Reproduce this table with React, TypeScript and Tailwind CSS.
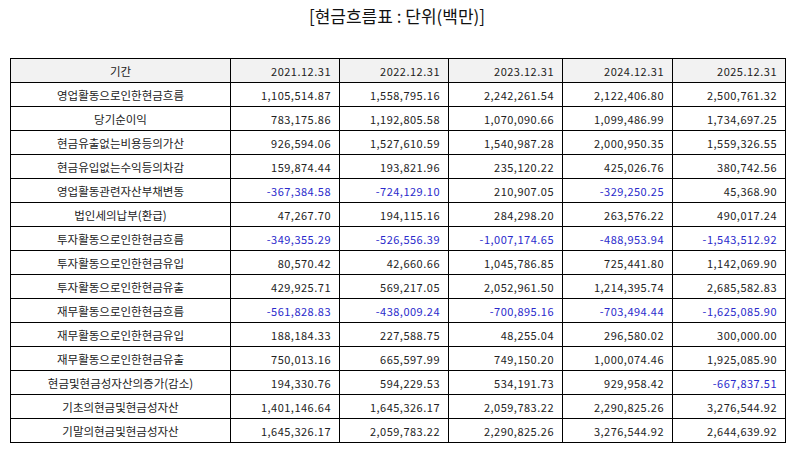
import React from "react";

type Row = { label: string; values: string[] };

const rows: Row[] = [
  { label: "영업활동으로인한현금흐름", values: ["1,105,514.87", "1,558,795.16", "2,242,261.54", "2,122,406.80", "2,500,761.32"] },
  { label: "당기순이익", values: ["783,175.86", "1,192,805.58", "1,070,090.66", "1,099,486.99", "1,734,697.25"] },
  { label: "현금유출없는비용등의가산", values: ["926,594.06", "1,527,610.59", "1,540,987.28", "2,000,950.35", "1,559,326.55"] },
  { label: "현금유입없는수익등의차감", values: ["159,874.44", "193,821.96", "235,120.22", "425,026.76", "380,742.56"] },
  { label: "영업활동관련자산부채변동", values: ["-367,384.58", "-724,129.10", "210,907.05", "-329,250.25", "45,368.90"] },
  { label: "법인세의납부(환급)", values: ["47,267.70", "194,115.16", "284,298.20", "263,576.22", "490,017.24"] },
  { label: "투자활동으로인한현금흐름", values: ["-349,355.29", "-526,556.39", "-1,007,174.65", "-488,953.94", "-1,543,512.92"] },
  { label: "투자활동으로인한현금유입", values: ["80,570.42", "42,660.66", "1,045,786.85", "725,441.80", "1,142,069.90"] },
  { label: "투자활동으로인한현금유출", values: ["429,925.71", "569,217.05", "2,052,961.50", "1,214,395.74", "2,685,582.83"] },
  { label: "재무활동으로인한현금흐름", values: ["-561,828.83", "-438,009.24", "-700,895.16", "-703,494.44", "-1,625,085.90"] },
  { label: "재무활동으로인한현금유입", values: ["188,184.33", "227,588.75", "48,255.04", "296,580.02", "300,000.00"] },
  { label: "재무활동으로인한현금유출", values: ["750,013.16", "665,597.99", "749,150.20", "1,000,074.46", "1,925,085.90"] },
  { label: "현금및현금성자산의증가(감소)", values: ["194,330.76", "594,229.53", "534,191.73", "929,958.42", "-667,837.51"] },
  { label: "기초의현금및현금성자산", values: ["1,401,146.64", "1,645,326.17", "2,059,783.22", "2,290,825.26", "3,276,544.92"] },
  { label: "기말의현금및현금성자산", values: ["1,645,326.17", "2,059,783.22", "2,290,825.26", "3,276,544.92", "2,644,639.92"] },
];

const headers = ["2021.12.31", "2022.12.31", "2023.12.31", "2024.12.31", "2025.12.31"];

export default function App() {
  return (
    <div
      className="w-[794px] h-[452px] bg-white text-[#222222] overflow-hidden"
      style={{ fontFamily: '"Noto Sans CJK KR", "Noto Sans", sans-serif' }}
    >
      <h1 className="h-[36px] pt-[4px] text-center text-[17px] leading-[24px] font-normal text-[#111111]">
        [현금흐름표 : 단위(백만)]
      </h1>
      <div className="pt-[22px] pl-[10px]">
        <table className="w-[775px] table-fixed border-collapse text-[11px]">
          <colgroup>
            <col className="w-[220px]" />
            <col className="w-[109px]" />
            <col className="w-[109px]" />
            <col className="w-[114px]" />
            <col className="w-[110px]" />
            <col className="w-[113px]" />
          </colgroup>
          <thead>
            <tr className="h-[24px] bg-[#f2f2f2]">
              <th className="border border-black font-normal text-center text-[11.5px] p-0 leading-[22px]">기간</th>
              {headers.map((h) => (
                <th key={h} className="border border-black font-normal text-right pr-[8px] p-0 leading-[22px] tracking-[0.5px]">
                  {h}
                </th>
              ))}
            </tr>
          </thead>
          <tbody>
            {rows.map((r) => (
              <tr key={r.label} className="h-[24px]">
                <td className="border border-black text-center text-[11.5px] p-0 leading-[22px]">{r.label}</td>
                {r.values.map((v, i) => (
                  <td
                    key={i}
                    className={
                      v.startsWith("-")
                        ? "border border-black text-right pr-[8px] leading-[22px] tracking-[0.5px] text-[#2a2acc]"
                        : "border border-black text-right pr-[8px] leading-[22px] tracking-[0.5px]"
                    }
                  >
                    {v}
                  </td>
                ))}
              </tr>
            ))}
          </tbody>
        </table>
      </div>
    </div>
  );
}
